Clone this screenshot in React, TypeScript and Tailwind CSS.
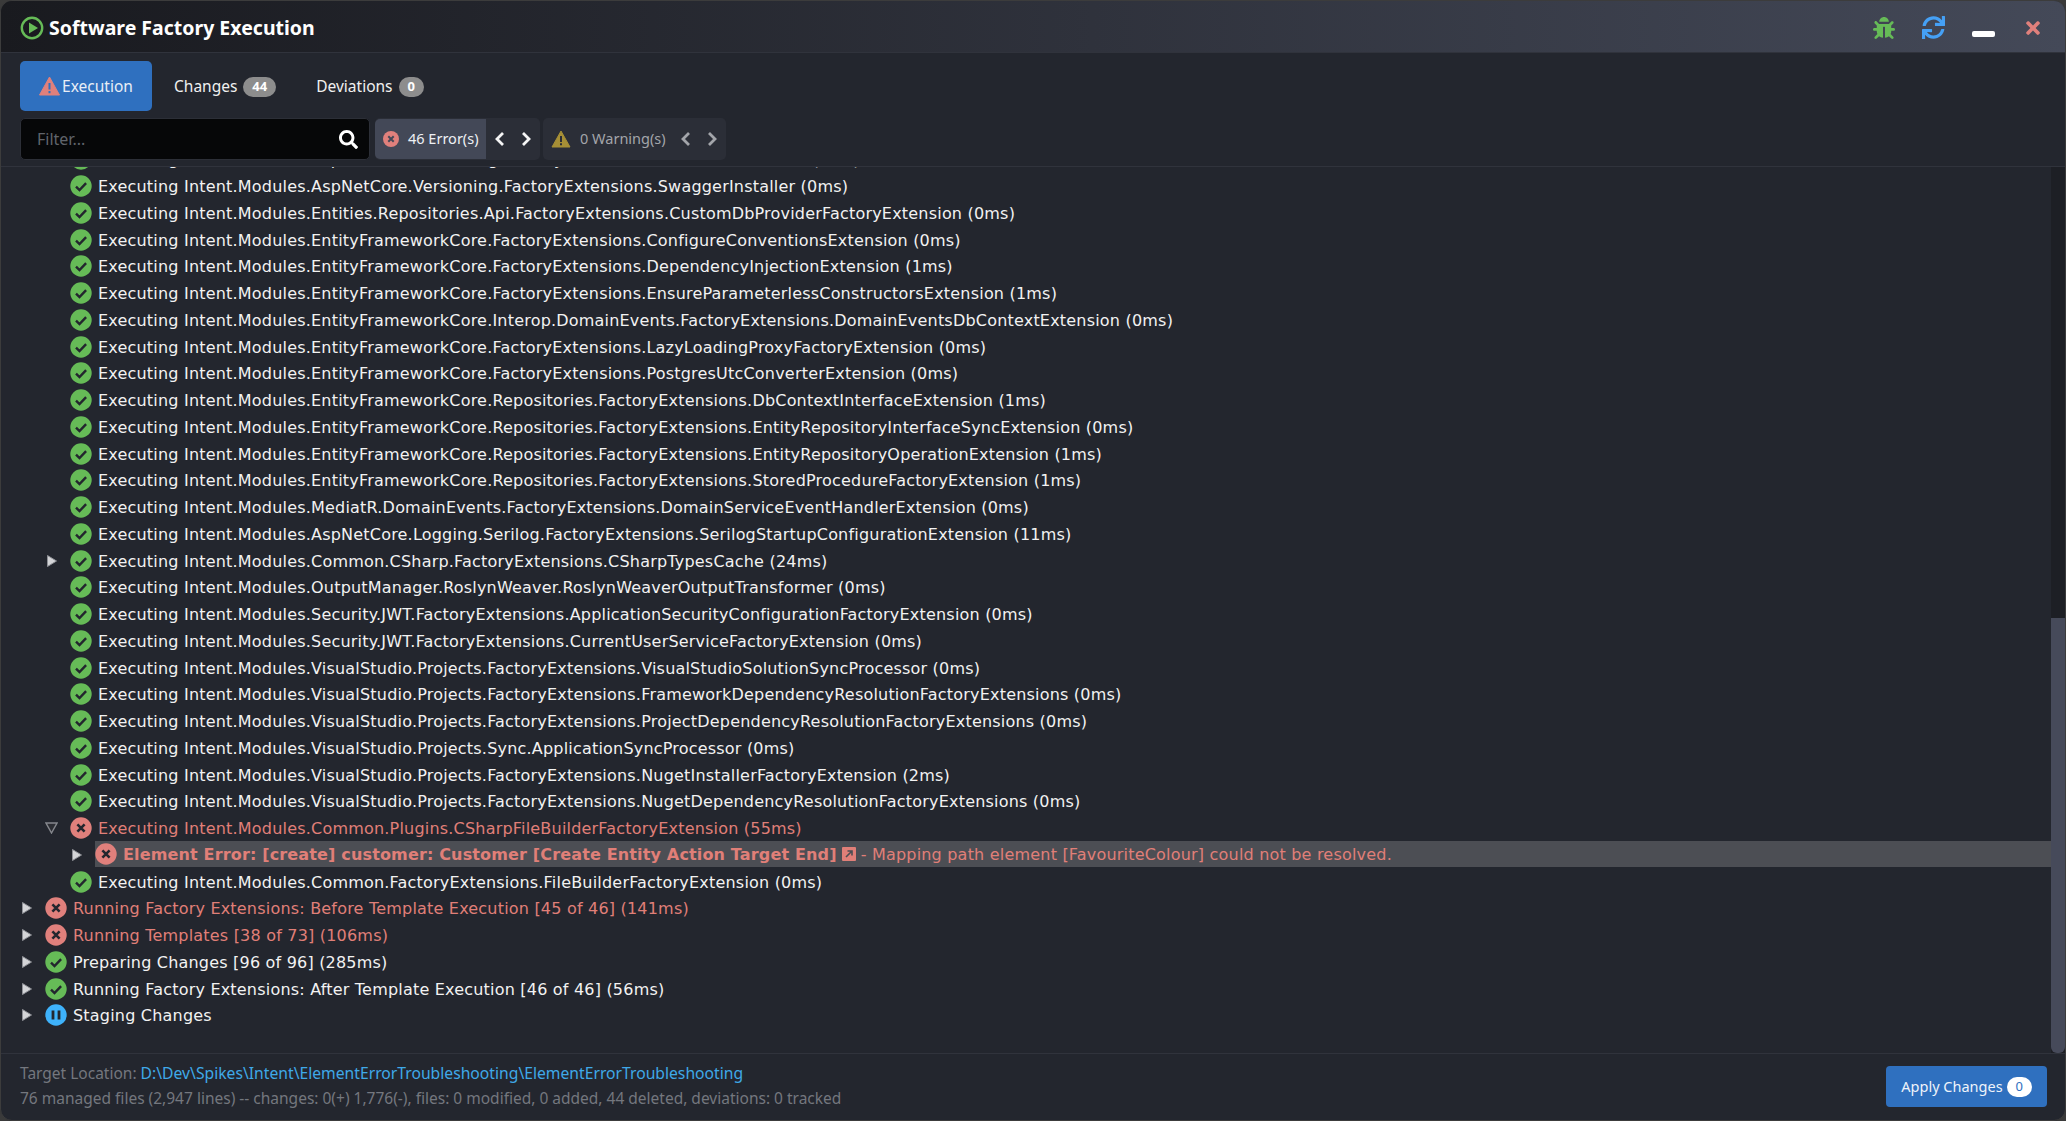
import React from "react";
import { FaBug, FaSync, FaTimes, FaSearch } from "react-icons/fa";

const ok = (level: number, text: string, arrow?: "r" | "d") => ({ level, text, state: "ok", arrow });
const P = "Executing Intent.Modules.";
const rows: { level: number; text: string; state: string; arrow?: "r" | "d" | undefined; sel?: boolean }[] = [
  ok(1, P + "AspNetCore.Versioning.FactoryExtensions.ServiceExtensions (0ms)"),
  ok(1, P + "AspNetCore.Versioning.FactoryExtensions.SwaggerInstaller (0ms)"),
  ok(1, P + "Entities.Repositories.Api.FactoryExtensions.CustomDbProviderFactoryExtension (0ms)"),
  ok(1, P + "EntityFrameworkCore.FactoryExtensions.ConfigureConventionsExtension (0ms)"),
  ok(1, P + "EntityFrameworkCore.FactoryExtensions.DependencyInjectionExtension (1ms)"),
  ok(1, P + "EntityFrameworkCore.FactoryExtensions.EnsureParameterlessConstructorsExtension (1ms)"),
  ok(1, P + "EntityFrameworkCore.Interop.DomainEvents.FactoryExtensions.DomainEventsDbContextExtension (0ms)"),
  ok(1, P + "EntityFrameworkCore.FactoryExtensions.LazyLoadingProxyFactoryExtension (0ms)"),
  ok(1, P + "EntityFrameworkCore.FactoryExtensions.PostgresUtcConverterExtension (0ms)"),
  ok(1, P + "EntityFrameworkCore.Repositories.FactoryExtensions.DbContextInterfaceExtension (1ms)"),
  ok(1, P + "EntityFrameworkCore.Repositories.FactoryExtensions.EntityRepositoryInterfaceSyncExtension (0ms)"),
  ok(1, P + "EntityFrameworkCore.Repositories.FactoryExtensions.EntityRepositoryOperationExtension (1ms)"),
  ok(1, P + "EntityFrameworkCore.Repositories.FactoryExtensions.StoredProcedureFactoryExtension (1ms)"),
  ok(1, P + "MediatR.DomainEvents.FactoryExtensions.DomainServiceEventHandlerExtension (0ms)"),
  ok(1, P + "AspNetCore.Logging.Serilog.FactoryExtensions.SerilogStartupConfigurationExtension (11ms)"),
  ok(1, P + "Common.CSharp.FactoryExtensions.CSharpTypesCache (24ms)", "r"),
  ok(1, P + "OutputManager.RoslynWeaver.RoslynWeaverOutputTransformer (0ms)"),
  ok(1, P + "Security.JWT.FactoryExtensions.ApplicationSecurityConfigurationFactoryExtension (0ms)"),
  ok(1, P + "Security.JWT.FactoryExtensions.CurrentUserServiceFactoryExtension (0ms)"),
  ok(1, P + "VisualStudio.Projects.FactoryExtensions.VisualStudioSolutionSyncProcessor (0ms)"),
  ok(1, P + "VisualStudio.Projects.FactoryExtensions.FrameworkDependencyResolutionFactoryExtensions (0ms)"),
  ok(1, P + "VisualStudio.Projects.FactoryExtensions.ProjectDependencyResolutionFactoryExtensions (0ms)"),
  ok(1, P + "VisualStudio.Projects.Sync.ApplicationSyncProcessor (0ms)"),
  ok(1, P + "VisualStudio.Projects.FactoryExtensions.NugetInstallerFactoryExtension (2ms)"),
  ok(1, P + "VisualStudio.Projects.FactoryExtensions.NugetDependencyResolutionFactoryExtensions (0ms)"),
  { level: 1, text: P + "Common.Plugins.CSharpFileBuilderFactoryExtension (55ms)", state: "err", arrow: "d" },
  { level: 2, text: "", state: "err", arrow: "r", sel: true },
  ok(1, P + "Common.FactoryExtensions.FileBuilderFactoryExtension (0ms)"),
  { level: 0, text: "Running Factory Extensions: Before Template Execution [45 of 46] (141ms)", state: "err", arrow: "r" },
  { level: 0, text: "Running Templates [38 of 73] (106ms)", state: "err", arrow: "r" },
  { level: 0, text: "Preparing Changes [96 of 96] (285ms)", state: "ok", arrow: "r" },
  { level: 0, text: "Running Factory Extensions: After Template Execution [46 of 46] (56ms)", state: "ok", arrow: "r" },
  { level: 0, text: "Staging Changes", state: "run", arrow: "r" },
];

function StateIcon({ state }: { state: string }) {
  const fill = state === "ok" ? "#66bb57" : state === "err" ? "#e0807c" : "#3eb2fb";
  return (
    <svg width="22" height="22" viewBox="0 0 22 22" className="shrink-0">
      <circle cx="11" cy="11" r="10.7" fill={fill} />
      {state === "ok" && <path d="M6 11.6l3.5 3.5 6.6-7" fill="none" stroke="#23262e" strokeWidth="2.4" />}
      {state === "err" && <path d="M7.4 7.4l7.2 7.2M14.6 7.4l-7.2 7.2" fill="none" stroke="#23262e" strokeWidth="2.6" />}
      {state === "run" && <path d="M8 6.5v9M14 6.5v9" fill="none" stroke="#23262e" strokeWidth="2.8" />}
    </svg>
  );
}

function Arrow({ dir }: { dir?: "r" | "d" }) {
  if (dir === "r")
    return (
      <svg width="12" height="14" viewBox="0 0 12 14">
        <path d="M1.5 1.5L10.5 7L1.5 12.5Z" fill="#d4d5d8" stroke="#8e9096" strokeWidth="1" />
      </svg>
    );
  if (dir === "d")
    return (
      <svg width="13" height="12" viewBox="0 0 13 12" className="-ml-[1px]">
        <path d="M1 1H12L6.5 11Z" fill="#2c2e34" stroke="#85878d" strokeWidth="1.4" />
      </svg>
    );
  return null;
}

function Row({ r }: { r: (typeof rows)[number] }) {
  const ind = ["pl-[19px]", "pl-[44px]", "pl-[69px]"][r.level];
  const color = r.state === "err" ? "text-[#e07f78]" : "text-[#f2f2f2]";
  return (
    <div className={`flex h-[26.76px] shrink-0 items-center ${ind}`}>
      <div className="flex w-[25px] shrink-0 items-center justify-start pl-[0.5px]">
        <Arrow dir={r.arrow} />
      </div>
      {r.sel ? (
        <div className="-mt-[1px] flex h-[26px] flex-1 items-center bg-[#4c4e54] text-[#e07f78]">
          <StateIcon state={r.state} />
          <span className="ml-[6px] whitespace-pre pt-[2px] font-bold tracking-[0.15px]">Element Error: [create] customer: Customer [Create Entity Action Target End]</span>
          <span className="ml-[5px] flex h-[14px] w-[14px] items-center justify-center rounded-[1px] bg-[#e07f78]">
            <svg width="10" height="10" viewBox="0 0 10 10">
              <path d="M2 8L7.5 2.5M3.5 2H8V6.5" fill="none" stroke="#4c4e54" strokeWidth="1.6" />
            </svg>
          </span>
          <span className="ml-[5px] whitespace-pre pt-[2px]">- Mapping path element [FavouriteColour] could not be resolved.</span>
        </div>
      ) : (
        <>
          <StateIcon state={r.state} />
          <span className={`ml-[6px] whitespace-pre pt-[2px] ${color}`}>{r.text}</span>
        </>
      )}
    </div>
  );
}

function Badge({ children }: { children: React.ReactNode }) {
  return (
    <span className="ml-[6px] mt-[1px] flex h-[20px] items-center rounded-full bg-[#8d8d8d] px-[9px] text-[13px] font-bold text-white">{children}</span>
  );
}

const Chev = ({ left, color }: { left?: boolean; color: string }) => (
  <svg width="14" height="18" viewBox="0 0 14 18">
    <path d={left ? "M10 3L4 9L10 15" : "M4 3L10 9L4 15"} fill="none" stroke={color} strokeWidth="2.8" />
  </svg>
);

export default function App() {
  return (
    <div className="h-[1121px] w-[2066px] overflow-hidden bg-[#3a3a3a] font-['Noto_Sans',sans-serif]">
      <div className="flex h-full w-full flex-col overflow-hidden rounded-[12px] border border-[#3c3c3c] bg-[#23262e]">
        {/* title */}
        <div className="flex h-[52px] shrink-0 items-center border-b border-[#30333c] bg-gradient-to-r from-[#191a1f] to-[#444958] pl-[19px] pr-[23px] pt-[2px]">
          <svg width="24" height="24" viewBox="0 0 24 24">
            <circle cx="12" cy="12" r="10.2" fill="none" stroke="#66bb57" strokeWidth="2.4" />
            <path d="M9 6.5L18 12L9 17.5Z" fill="#66bb57" />
          </svg>
          <span className="ml-[5px] text-[19.5px] font-bold text-white">Software Factory Execution</span>
          <div className="ml-auto flex items-center">
            <FaBug className="h-[22px] w-[22px] text-[#66bb57]" />
            <FaSync className="ml-[27px] h-[23px] w-[23px] text-[#45a0f5]" />
            <div className="ml-[27px] mt-[12px] h-[6px] w-[23px] rounded-[2px] bg-white" />
            <FaTimes className="ml-[29px] h-[20px] w-[18px] text-[#e0807c]" />
          </div>
        </div>
        {/* tabs */}
        <div className="flex h-[50px] shrink-0 mt-[8px] ml-[19px] items-center text-[15.5px] text-[#f0f0f0]">
          <div className="flex h-full w-[132px] items-center justify-center rounded-[5px] bg-[#2f70bf] text-[#e8eef6]">
            <svg width="21" height="20" viewBox="0 0 21 20" className="mr-[2px] -mt-[1px]">
              <path d="M10.5 1L20.5 19H0.5Z" fill="#e0807c" stroke="#e0807c" strokeLinejoin="round" />
              <path d="M10.5 7v6.5M10.5 15v2.2" stroke="#2f70bf" strokeWidth="2" />
            </svg>
            <span className="pt-[1px]">Execution</span>
          </div>
          <div className="ml-[22px] flex items-center pt-[1px]">Changes<Badge>44</Badge></div>
          <div className="ml-[40px] flex items-center pt-[1px]">Deviations<Badge>0</Badge></div>
        </div>
        {/* filter */}
        <div className="mt-[7px] ml-[19px] flex h-[42px] shrink-0 items-start text-[14.5px]">
          <div className="flex h-full w-[350px] items-center rounded-[5px] border border-[#2c2f37] bg-[#060708] pl-[16px] pr-[11px]">
            <span className="text-[16px] text-[#60646b]">Filter...</span>
            <FaSearch className="ml-auto h-[19px] w-[19px] text-white" />
          </div>
          <div className="ml-[5px] flex h-full w-[165px] items-center rounded-[5px] bg-[#2b2e37]">
            <div className="flex h-[40px] w-[111px] items-center rounded-l-[5px] bg-[#434857] pl-[8px] text-[#eef0f4]">
              <svg width="16" height="16" viewBox="0 0 16 16" className="shrink-0">
                <circle cx="8" cy="8" r="8" fill="#e0807c" />
                <path d="M5.3 5.3l5.4 5.4M10.7 5.3l-5.4 5.4" stroke="#434857" strokeWidth="2" />
              </svg>
              <span className="ml-[9px]">46 Error(s)</span>
            </div>
            <div className="ml-[7px] flex gap-[12px]">
              <Chev left color="#f5f5f5" />
              <Chev color="#f5f5f5" />
            </div>
          </div>
          <div className="ml-[3px] flex h-full w-[183px] items-center rounded-[5px] bg-[#2b2e37] text-[#a3a5aa]">
            <svg width="20" height="18" viewBox="0 0 20 18" className="ml-[8px] shrink-0">
              <path d="M10 1L19 17H1Z" fill="#a68f36" stroke="#a68f36" strokeLinejoin="round" />
              <path d="M10 6v6M10 13.2v2" stroke="#2b2e37" strokeWidth="2" />
            </svg>
            <span className="ml-[9px]">0 Warning(s)</span>
            <div className="ml-[13px] flex gap-[12px]">
              <Chev left color="#a3a5aa" />
              <Chev color="#a3a5aa" />
            </div>
          </div>
        </div>
        {/* tree */}
        <div className="mt-[6px] flex min-h-0 flex-1 border-t border-[#30333c] overflow-hidden">
          <div className="relative flex min-w-0 flex-1 flex-col overflow-hidden font-['DejaVu_Sans',sans-serif] text-[16px] tracking-[0.2px]">
            <div className="mt-[-21px] flex flex-col">
              {rows.map((r, i) => (
                <Row key={i} r={r} />
              ))}
            </div>
          </div>
          <div className="flex w-[14px] shrink-0 flex-col justify-end bg-[#1d1f25]">
            <div className="h-[435px] rounded-b-[6px] bg-[#464a5a]" />
          </div>
        </div>
        {/* footer */}
        <div className="flex h-[67px] shrink-0 items-start border-t border-[#30333c] pl-[19px] pr-[18px]">
          <div className="mt-[7px] flex flex-col text-[15.5px] leading-[25px] text-[#74777e]">
            <div>
              Target Location: <span className="text-[15.7px] text-[#3fa9e8]">D:\Dev\Spikes\Intent\ElementErrorTroubleshooting\ElementErrorTroubleshooting</span>
            </div>
            <div>76 managed files (2,947 lines) -- changes: 0(+) 1,776(-), files: 0 modified, 0 added, 44 deleted, deviations: 0 tracked</div>
          </div>
          <div className="ml-auto mt-[12px] flex h-[41px] w-[161px] items-center justify-center rounded-[4px] bg-[#2f70bf] text-[14.5px] text-[#eef3fa]">
            Apply Changes
            <span className="ml-[4px] flex h-[20px] w-[25px] items-center justify-center rounded-full bg-white text-[13px] text-[#2f70bf]">0</span>
          </div>
        </div>
      </div>
    </div>
  );
}
